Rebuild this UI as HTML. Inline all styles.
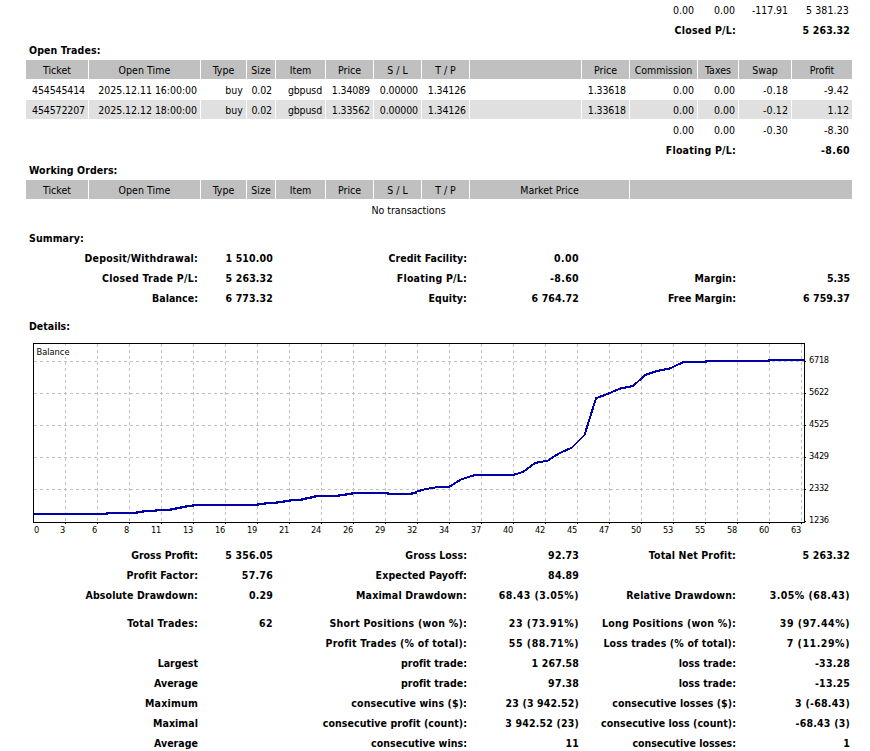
<!DOCTYPE html>
<html>
<head>
<meta charset="utf-8">
<title>Statement</title>
<style>
html,body{margin:0;padding:0;background:#fff;}
body{width:870px;height:751px;overflow:hidden;position:relative;font-family:"DejaVu Sans Condensed","DejaVu Sans","Liberation Sans",sans-serif;font-stretch:condensed;font-size:10.5px;color:#000;}
table{position:absolute;left:25px;top:-1px;width:828px;border-collapse:separate;border-spacing:1px;table-layout:fixed;}
td{height:19px;padding:1px 3px 0 3px;line-height:18px;box-sizing:border-box;text-align:center;white-space:nowrap;overflow:visible;vertical-align:top;}
td.r{text-align:right;}
td.l{text-align:left;}
tr.h td{background:#c0c0c0;}
tr.e td{background:#e0e0e0;}
tr.sp td{height:7px;padding:0;line-height:0;font-size:0;}
tr.ch td{height:208px;padding:0;position:relative;}
b{font-weight:bold;}
td.r b{margin-right:-1px;}
svg.chart{position:absolute;left:-26px;top:0;}
.ct text.d{letter-spacing:-0.3px;}
.ct text{font-size:9.2px;font-family:"DejaVu Sans Condensed","DejaVu Sans","Liberation Sans",sans-serif;fill:#000;}
</style>
</head>
<body>
<table cellspacing="1" cellpadding="0">
<colgroup><col style="width:62px"><col style="width:111px"><col style="width:45px"><col style="width:28px"><col style="width:49px"><col style="width:47px"><col style="width:47px"><col style="width:47px"><col style="width:111px"><col style="width:47px"><col style="width:67px"><col style="width:40px"><col style="width:52px"><col style="width:60px"></colgroup>
<tr><td colspan="10">&nbsp;</td><td class="r n">0.00</td><td class="r n">0.00</td><td class="r n" style="letter-spacing:-0.07px">-117.91</td><td class="r n" style="letter-spacing:0.12px">5 381.23</td></tr>
<tr><td colspan="2">&nbsp;</td><td colspan="10" class="r" style="letter-spacing:0.23px"><b>Closed P/L:</b></td><td colspan="2" class="r n" style="letter-spacing:0.14px"><b>5 263.32</b></td></tr>
<tr><td colspan="14" class="l" style="letter-spacing:0.13px"><b>Open Trades:</b></td></tr>
<tr class="h"><td>Ticket</td><td style="letter-spacing:0.07px">Open Time</td><td>Type</td><td>Size</td><td>Item</td><td>Price</td><td>S / L</td><td>T / P</td><td>&nbsp;</td><td>Price</td><td>Commission</td><td>Taxes</td><td>Swap</td><td>Profit</td></tr>
<tr><td class="r n" style="letter-spacing:-0.12px">454545414</td><td class="r n" style="letter-spacing:-0.04px">2025.12.11 16:00:00</td><td class="r" style="letter-spacing:0.07px">buy</td><td class="r n" style="letter-spacing:-0.13px">0.02</td><td class="r" style="letter-spacing:-0.13px">gbpusd</td><td class="r n" style="letter-spacing:-0.12px">1.34089</td><td class="r n" style="letter-spacing:-0.12px">0.00000</td><td class="r n" style="letter-spacing:-0.12px">1.34126</td><td>&nbsp;</td><td class="r n" style="letter-spacing:-0.12px">1.33618</td><td class="r n">0.00</td><td class="r n">0.00</td><td class="r n" style="letter-spacing:0.09px">-0.18</td><td class="r n" style="letter-spacing:0.13px">-9.42</td></tr>
<tr class="e"><td class="r n" style="letter-spacing:-0.12px">454572207</td><td class="r n" style="letter-spacing:-0.04px">2025.12.12 18:00:00</td><td class="r" style="letter-spacing:0.07px">buy</td><td class="r n" style="letter-spacing:-0.13px">0.02</td><td class="r" style="letter-spacing:-0.13px">gbpusd</td><td class="r n" style="letter-spacing:-0.12px">1.33562</td><td class="r n" style="letter-spacing:-0.12px">0.00000</td><td class="r n" style="letter-spacing:-0.12px">1.34126</td><td>&nbsp;</td><td class="r n" style="letter-spacing:-0.12px">1.33618</td><td class="r n">0.00</td><td class="r n">0.00</td><td class="r n" style="letter-spacing:0.09px">-0.12</td><td class="r n" style="letter-spacing:0.09px">1.12</td></tr>
<tr><td colspan="10">&nbsp;</td><td class="r n">0.00</td><td class="r n">0.00</td><td class="r n" style="letter-spacing:0.11px">-0.30</td><td class="r n" style="letter-spacing:0.11px">-8.30</td></tr>
<tr><td colspan="2">&nbsp;</td><td colspan="10" class="r" style="letter-spacing:0.23px"><b>Floating P/L:</b></td><td colspan="2" class="r n" style="letter-spacing:0.35px"><b>-8.60</b></td></tr>
<tr><td colspan="14" class="l" style="letter-spacing:0.07px"><b>Working Orders:</b></td></tr>
<tr class="h"><td>Ticket</td><td style="letter-spacing:0.07px">Open Time</td><td>Type</td><td>Size</td><td>Item</td><td>Price</td><td>S / L</td><td>T / P</td><td colspan="2">Market Price</td><td colspan="4">&nbsp;</td></tr>
<tr><td colspan="13">No transactions</td><td>&nbsp;</td></tr>
<tr class="sp"><td colspan="14"></td></tr>
<tr><td colspan="14" class="l" style="letter-spacing:0.1px"><b>Summary:</b></td></tr>
<tr><td colspan="2" class="r" style="letter-spacing:0.23px"><b>Deposit/Withdrawal:</b></td><td colspan="2" class="r n" style="letter-spacing:0.15px"><b>1 510.00</b></td><td colspan="4" class="r" style="letter-spacing:0.04px"><b>Credit Facility:</b></td><td class="r n" style="letter-spacing:0.42px"><b>0.00</b></td><td colspan="5">&nbsp;</td></tr>
<tr><td colspan="2" class="r" style="letter-spacing:0.25px"><b>Closed Trade P/L:</b></td><td colspan="2" class="r n" style="letter-spacing:0.14px"><b>5 263.32</b></td><td colspan="4" class="r" style="letter-spacing:0.23px"><b>Floating P/L:</b></td><td class="r n" style="letter-spacing:0.35px"><b>-8.60</b></td><td colspan="3" class="r" style="letter-spacing:0.08px"><b>Margin:</b></td><td colspan="2" class="r n" style="letter-spacing:-0.08px"><b>5.35</b></td></tr>
<tr><td colspan="2" class="r" style="letter-spacing:0.04px"><b>Balance:</b></td><td colspan="2" class="r n" style="letter-spacing:0.15px"><b>6 773.32</b></td><td colspan="4" class="r" style="letter-spacing:0.12px"><b>Equity:</b></td><td class="r n" style="letter-spacing:0.15px"><b>6 764.72</b></td><td colspan="3" class="r" style="letter-spacing:0.04px"><b>Free Margin:</b></td><td colspan="2" class="r n" style="letter-spacing:0.09px"><b>6 759.37</b></td></tr>
<tr class="sp"><td colspan="14"></td></tr>
<tr><td colspan="14" class="l"><b>Details:</b></td></tr>
<tr class="ch"><td colspan="14"><svg class="chart" width="870" height="209" viewBox="0 336 870 209">
<g stroke="#c0c0c0" stroke-width="1" stroke-dasharray="3 3" shape-rendering="crispEdges" fill="none">
<line x1="65.5" y1="344" x2="65.5" y2="522"/><line x1="97.5" y1="344" x2="97.5" y2="522"/><line x1="129.5" y1="344" x2="129.5" y2="522"/><line x1="161.5" y1="344" x2="161.5" y2="522"/><line x1="193.5" y1="344" x2="193.5" y2="522"/><line x1="225.5" y1="344" x2="225.5" y2="522"/><line x1="257.5" y1="344" x2="257.5" y2="522"/><line x1="289.5" y1="344" x2="289.5" y2="522"/><line x1="321.5" y1="344" x2="321.5" y2="522"/><line x1="353.5" y1="344" x2="353.5" y2="522"/><line x1="385.5" y1="344" x2="385.5" y2="522"/><line x1="417.5" y1="344" x2="417.5" y2="522"/><line x1="449.5" y1="344" x2="449.5" y2="522"/><line x1="481.5" y1="344" x2="481.5" y2="522"/><line x1="513.5" y1="344" x2="513.5" y2="522"/><line x1="545.5" y1="344" x2="545.5" y2="522"/><line x1="577.5" y1="344" x2="577.5" y2="522"/><line x1="609.5" y1="344" x2="609.5" y2="522"/><line x1="641.5" y1="344" x2="641.5" y2="522"/><line x1="673.5" y1="344" x2="673.5" y2="522"/><line x1="705.5" y1="344" x2="705.5" y2="522"/><line x1="737.5" y1="344" x2="737.5" y2="522"/><line x1="769.5" y1="344" x2="769.5" y2="522"/><line x1="801.5" y1="344" x2="801.5" y2="522"/>
<line x1="34" y1="361.5" x2="804" y2="361.5"/><line x1="34" y1="393.5" x2="804" y2="393.5"/><line x1="34" y1="425.5" x2="804" y2="425.5"/><line x1="34" y1="457.5" x2="804" y2="457.5"/><line x1="34" y1="489.5" x2="804" y2="489.5"/>
</g>
<g stroke="#000" stroke-width="1" shape-rendering="crispEdges" fill="none">
<rect x="33.5" y="343.5" width="771" height="179"/>
<line x1="65.5" y1="523" x2="65.5" y2="524"/><line x1="97.5" y1="523" x2="97.5" y2="524"/><line x1="129.5" y1="523" x2="129.5" y2="524"/><line x1="161.5" y1="523" x2="161.5" y2="524"/><line x1="193.5" y1="523" x2="193.5" y2="524"/><line x1="225.5" y1="523" x2="225.5" y2="524"/><line x1="257.5" y1="523" x2="257.5" y2="524"/><line x1="289.5" y1="523" x2="289.5" y2="524"/><line x1="321.5" y1="523" x2="321.5" y2="524"/><line x1="353.5" y1="523" x2="353.5" y2="524"/><line x1="385.5" y1="523" x2="385.5" y2="524"/><line x1="417.5" y1="523" x2="417.5" y2="524"/><line x1="449.5" y1="523" x2="449.5" y2="524"/><line x1="481.5" y1="523" x2="481.5" y2="524"/><line x1="513.5" y1="523" x2="513.5" y2="524"/><line x1="545.5" y1="523" x2="545.5" y2="524"/><line x1="577.5" y1="523" x2="577.5" y2="524"/><line x1="609.5" y1="523" x2="609.5" y2="524"/><line x1="641.5" y1="523" x2="641.5" y2="524"/><line x1="673.5" y1="523" x2="673.5" y2="524"/><line x1="705.5" y1="523" x2="705.5" y2="524"/><line x1="737.5" y1="523" x2="737.5" y2="524"/><line x1="769.5" y1="523" x2="769.5" y2="524"/><line x1="801.5" y1="523" x2="801.5" y2="524"/>
<line x1="805" y1="361.5" x2="806" y2="361.5"/><line x1="805" y1="393.5" x2="806" y2="393.5"/><line x1="805" y1="425.5" x2="806" y2="425.5"/><line x1="805" y1="457.5" x2="806" y2="457.5"/><line x1="805" y1="489.5" x2="806" y2="489.5"/><line x1="805" y1="521.5" x2="806" y2="521.5"/>
</g>
<polyline fill="none" stroke="#0000a8" stroke-width="2" stroke-linejoin="round" shape-rendering="crispEdges" points="34,514 107,514 107,513 137,513 137,512 143,512 143,511 156,511 156,510 171,510 171,509 176,509 176,508 181,508 181,507 186,507 186,506 193,506 193,505 258,505 258,504 265,504 265,503 277,503 277,502 284,502 284,501 290,501 290,500 302,500 302,499 306,499 306,498 311,498 311,497 315,497 315,496 339,496 339,495 346,495 346,494 352,494 352,493 388,493 388,494 412,494 412,493 416,493 416,492 417,491.5 426,489 437,487.2 449,487 461,479.5 475,475 513,475 523,472 535,463 548,460.5 559,453.4 572,447.5 584.5,435 596,398.2 608,393.8 620,388.6 633,386 645.5,374.8 657,371 670,368.4 683.5,362 706,362 706,361 769,361 769,360 805,360"/>
<g class="ct">
<rect x="36" y="346" width="35" height="11" fill="#fff"/><text x="36.5" y="355">Balance</text>
<text class="d" x="809" y="363">6718</text><text class="d" x="809" y="395">5622</text><text class="d" x="809" y="427">4525</text><text class="d" x="809" y="459">3429</text><text class="d" x="809" y="491">2332</text><text class="d" x="809" y="523">1236</text>
<text x="34" y="533">0</text><text class="d" x="65" y="533" text-anchor="end">3</text><text class="d" x="97" y="533" text-anchor="end">6</text><text class="d" x="129" y="533" text-anchor="end">8</text><text class="d" x="161" y="533" text-anchor="end">11</text><text class="d" x="193" y="533" text-anchor="end">13</text><text class="d" x="225" y="533" text-anchor="end">16</text><text class="d" x="257" y="533" text-anchor="end">19</text><text class="d" x="289" y="533" text-anchor="end">21</text><text class="d" x="321" y="533" text-anchor="end">24</text><text class="d" x="353" y="533" text-anchor="end">26</text><text class="d" x="385" y="533" text-anchor="end">29</text><text class="d" x="417" y="533" text-anchor="end">32</text><text class="d" x="449" y="533" text-anchor="end">34</text><text class="d" x="481" y="533" text-anchor="end">37</text><text class="d" x="513" y="533" text-anchor="end">40</text><text class="d" x="545" y="533" text-anchor="end">42</text><text class="d" x="577" y="533" text-anchor="end">45</text><text class="d" x="609" y="533" text-anchor="end">47</text><text class="d" x="641" y="533" text-anchor="end">50</text><text class="d" x="673" y="533" text-anchor="end">53</text><text class="d" x="705" y="533" text-anchor="end">55</text><text class="d" x="737" y="533" text-anchor="end">58</text><text class="d" x="769" y="533" text-anchor="end">60</text><text class="d" x="801" y="533" text-anchor="end">63</text>
</g>
</svg></td></tr>
<tr><td colspan="2" class="r"><b>Gross Profit:</b></td><td colspan="2" class="r n" style="letter-spacing:0.19px"><b>5 356.05</b></td><td colspan="4" class="r" style="letter-spacing:0.06px"><b>Gross Loss:</b></td><td class="r n" style="letter-spacing:0.2px"><b>92.73</b></td><td colspan="3" class="r" style="letter-spacing:0.14px"><b>Total Net Profit:</b></td><td colspan="2" class="r n" style="letter-spacing:0.14px"><b>5 263.32</b></td></tr>
<tr><td colspan="2" class="r" style="letter-spacing:0.08px"><b>Profit Factor:</b></td><td colspan="2" class="r n" style="letter-spacing:0.26px"><b>57.76</b></td><td colspan="4" class="r" style="letter-spacing:0.11px"><b>Expected Payoff:</b></td><td class="r n" style="letter-spacing:0.2px"><b>84.89</b></td><td colspan="3" class="r">&nbsp;</td><td colspan="2" class="r n">&nbsp;</td></tr>
<tr><td colspan="2" class="r" style="letter-spacing:0.11px"><b>Absolute Drawdown:</b></td><td colspan="2" class="r n" style="letter-spacing:0.2px"><b>0.29</b></td><td colspan="4" class="r" style="letter-spacing:0.18px"><b>Maximal Drawdown:</b></td><td class="r n" style="letter-spacing:0.44px"><b>68.43 (3.05%)</b></td><td colspan="3" class="r" style="letter-spacing:0.16px"><b>Relative Drawdown:</b></td><td colspan="2" class="r n" style="letter-spacing:0.44px"><b>3.05% (68.43)</b></td></tr>
<tr class="sp"><td colspan="14"></td></tr>
<tr><td colspan="2" class="r" style="letter-spacing:0.23px"><b>Total Trades:</b></td><td colspan="2" class="r n" style="letter-spacing:0.38px"><b>62</b></td><td colspan="4" class="r" style="letter-spacing:0.24px"><b>Short Positions (won %):</b></td><td class="r n" style="letter-spacing:0.52px"><b>23 (73.91%)</b></td><td colspan="3" class="r" style="letter-spacing:0.24px"><b>Long Positions (won %):</b></td><td colspan="2" class="r n" style="letter-spacing:0.52px"><b>39 (97.44%)</b></td></tr>
<tr><td colspan="2" class="r">&nbsp;</td><td colspan="2" class="r n">&nbsp;</td><td colspan="4" class="r" style="letter-spacing:0.21px"><b>Profit Trades (% of total):</b></td><td class="r n" style="letter-spacing:0.52px"><b>55 (88.71%)</b></td><td colspan="3" class="r" style="letter-spacing:0.15px"><b>Loss trades (% of total):</b></td><td colspan="2" class="r n" style="letter-spacing:0.55px"><b>7 (11.29%)</b></td></tr>
<tr><td colspan="2" class="r"><b>Largest</b></td><td colspan="2" class="r n">&nbsp;</td><td colspan="4" class="r" style="letter-spacing:0.04px"><b>profit trade:</b></td><td class="r n" style="letter-spacing:0.14px"><b>1 267.58</b></td><td colspan="3" class="r" style="letter-spacing:0.04px"><b>loss trade:</b></td><td colspan="2" class="r n" style="letter-spacing:0.2px"><b>-33.28</b></td></tr>
<tr><td colspan="2" class="r" style="letter-spacing:0.05px"><b>Average</b></td><td colspan="2" class="r n">&nbsp;</td><td colspan="4" class="r" style="letter-spacing:0.04px"><b>profit trade:</b></td><td class="r n" style="letter-spacing:0.2px"><b>97.38</b></td><td colspan="3" class="r" style="letter-spacing:0.04px"><b>loss trade:</b></td><td colspan="2" class="r n" style="letter-spacing:0.2px"><b>-13.25</b></td></tr>
<tr><td colspan="2" class="r" style="letter-spacing:0.21px"><b>Maximum</b></td><td colspan="2" class="r n">&nbsp;</td><td colspan="4" class="r" style="letter-spacing:0.11px"><b>consecutive wins ($):</b></td><td class="r n" style="letter-spacing:0.16px"><b>23 (3 942.52)</b></td><td colspan="3" class="r" style="letter-spacing:0.07px"><b>consecutive losses ($):</b></td><td colspan="2" class="r n" style="letter-spacing:0.27px"><b>3 (-68.43)</b></td></tr>
<tr><td colspan="2" class="r" style="letter-spacing:0.06px"><b>Maximal</b></td><td colspan="2" class="r n">&nbsp;</td><td colspan="4" class="r" style="letter-spacing:0.07px"><b>consecutive profit (count):</b></td><td class="r n" style="letter-spacing:0.18px"><b>3 942.52 (23)</b></td><td colspan="3" class="r" style="letter-spacing:0.06px"><b>consecutive loss (count):</b></td><td colspan="2" class="r n" style="letter-spacing:0.22px"><b>-68.43 (3)</b></td></tr>
<tr><td colspan="2" class="r" style="letter-spacing:0.05px"><b>Average</b></td><td colspan="2" class="r n">&nbsp;</td><td colspan="4" class="r" style="letter-spacing:0.06px"><b>consecutive wins:</b></td><td class="r n" style="letter-spacing:0.2px"><b>11</b></td><td colspan="3" class="r"><b>consecutive losses:</b></td><td colspan="2" class="r n" style="letter-spacing:0.2px"><b>1</b></td></tr>
</table>
</body>
</html>
